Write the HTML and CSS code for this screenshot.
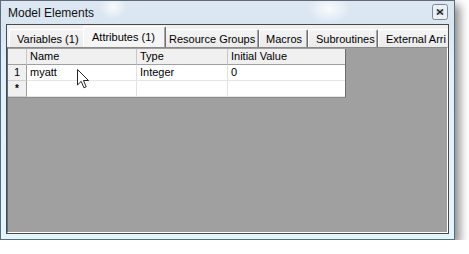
FILE: index.html
```html
<!DOCTYPE html>
<html lang="en">
<head>
    <meta charset="UTF-8">
    <title>Model Elements</title>
    <link rel="stylesheet" href="styles.css">
</head>
<body>
    <div class="window">
        <div class="titlebar">
            <span class="title">Model Elements</span>
            <span class="close">
                <svg width="16" height="16" viewBox="0 0 16 16">
                    <rect x="0.5" y="0.5" width="15" height="15" rx="2" fill="#eaf0f5" stroke="#7d8a97"/>
                    <rect x="4.5" y="5" width="7" height="6" fill="#c9cdd1"/>
                    <path d="M5 5.5 L11 10.5 M11 5.5 L5 10.5" stroke="#222" stroke-width="1.5"/>
                </svg>
            </span>
        </div>
        <div class="client">
            <div class="tabs">
                <div class="tab tab-vars">Variables (1)</div>
                <div class="tab active">Attributes (1)</div>
                <div class="tab tab-res">Resource Groups</div>
                <div class="tab tab-mac">Macros</div>
                <div class="tab tab-sub">Subroutines</div>
                <div class="tab tab-ext">External Arri</div>
            </div>
            <div class="pane">
                <div class="grid">
                    <div class="cell corner"></div>
                    <div class="cell head">Name</div>
                    <div class="cell head">Type</div>
                    <div class="cell head last">Initial Value</div>

                    <div class="cell rowhead">1</div>
                    <div class="cell">myatt</div>
                    <div class="cell">Integer</div>
                    <div class="cell last">0</div>

                    <div class="cell rowhead star">*</div>
                    <div class="cell"></div>
                    <div class="cell"></div>
                    <div class="cell last"></div>
                </div>
            </div>
        </div>
        <svg class="cursor" width="13" height="20" viewBox="0 0 13 20">
            <path d="M0.5 0.5 L0.5 16 L4.2 12.4 L7 18.8 L9.2 17.8 L6.5 11.5 L11.5 11.5 Z" fill="#fff" stroke="#222" stroke-width="1" stroke-linejoin="round"/>
        </svg>
    </div>
</body>
</html>
```

FILE: styles.css
```css
body {
    margin: 0;
    background: #fff;
    font-family: "Liberation Sans", Arial, sans-serif;
    color: #000;
}
.window {
    position: relative;
    width: 455px;
    height: 240px;
    box-sizing: border-box;
    border: 1px solid #5f6a76;
    padding: 0 5px 5px;
    display: flex;
    flex-direction: column;
    background:
        radial-gradient(ellipse 14px 12px at 112px 6px, rgba(255,255,255,0.8), rgba(255,255,255,0)),
        radial-gradient(ellipse 22px 14px at 328px 8px, rgba(255,255,255,0.85), rgba(255,255,255,0)),
        linear-gradient(#dde7f2, #d9e6f2 24px, #dcf1fb 60px, #e2f6fd);
    box-shadow: 5px 5px 9px rgba(0, 0, 0, 0.45);
}
.titlebar {
    height: 23px;
    display: flex;
    align-items: center;
    justify-content: space-between;
    padding: 0 1px 0 2px;
}
.title {
    font-size: 12px;
    color: #111;
}
.close {
    display: block;
    height: 16px;
    margin-top: -1px;
}
.close svg {
    display: block;
}
.client {
    flex: 1;
    min-height: 0;
    border: 1px solid #4a4a4a;
    background: #f0f0f0;
    display: flex;
    flex-direction: column;
}
.tabs {
    height: 22px;
    flex: none;
    display: flex;
    align-items: flex-end;
    padding-left: 2px;
    overflow: hidden;
}
.tab {
    flex: none;
    box-sizing: border-box;
    height: 18px;
    padding: 2px 0 0 7px;
    font-size: 11px;
    line-height: 14px;
    white-space: nowrap;
    overflow: hidden;
    border-top: 1px solid #fff;
    border-left: 1px solid #fff;
    border-right: 1px solid #6f6f6f;
    border-radius: 2px 2px 0 0;
    box-shadow: inset -1px 0 #a8a8a8;
    background: linear-gradient(#f4f4f4, #ebebeb);
}
.tab.active {
    position: relative;
    z-index: 1;
    width: 83px;
    height: 21px;
    margin: 0 -3px;
    padding: 3px 0 0 8px;
    background: #f5f5f5;
}
.tab-vars { width: 77px; padding-left: 7px; }
.tab-res { width: 96px; padding-left: 5px; }
.tab-mac { width: 49px; padding-left: 6px; }
.tab-sub { width: 70px; }
.tab-ext { width: 96px; }
.pane {
    flex: 1;
    min-height: 0;
    padding-top: 1px;
    background: #a0a0a0;
    border-top: 1px solid #8a8a8a;
    border-left: 1px solid #696969;
    border-right: 1px solid #fff;
    border-bottom: 1px solid #fff;
}
.grid {
    display: grid;
    grid-template-columns: 19px 110px 91px 117px;
    grid-auto-rows: 16px;
    width: fit-content;
    border-right: 1px solid #6d6d6d;
    border-bottom: 1px solid #8c8c8c;
    background: #fff;
    font-size: 11px;
}
.cell {
    box-sizing: border-box;
    padding: 0 3px;
    line-height: 15px;
    white-space: nowrap;
    border-right: 1px solid #e2e2e2;
    border-bottom: 1px solid #e6e6e6;
}
.cell.last {
    border-right: none;
}
.head, .corner {
    background: #f0f0f0;
    border-right: 1px solid #c8c8c8;
    border-bottom: 1px solid #a0a0a0;
}
.head.last {
    border-right: none;
}
.rowhead {
    background: #f0f0f0;
    text-align: center;
    padding: 0;
    border-right: 1px solid #a0a0a0;
    border-bottom: 1px solid #d0d0d0;
}
.star {
    font-size: 10px;
    font-weight: bold;
    line-height: 16px;
}
.cursor {
    position: absolute;
    left: 76px;
    top: 68px;
}
```
